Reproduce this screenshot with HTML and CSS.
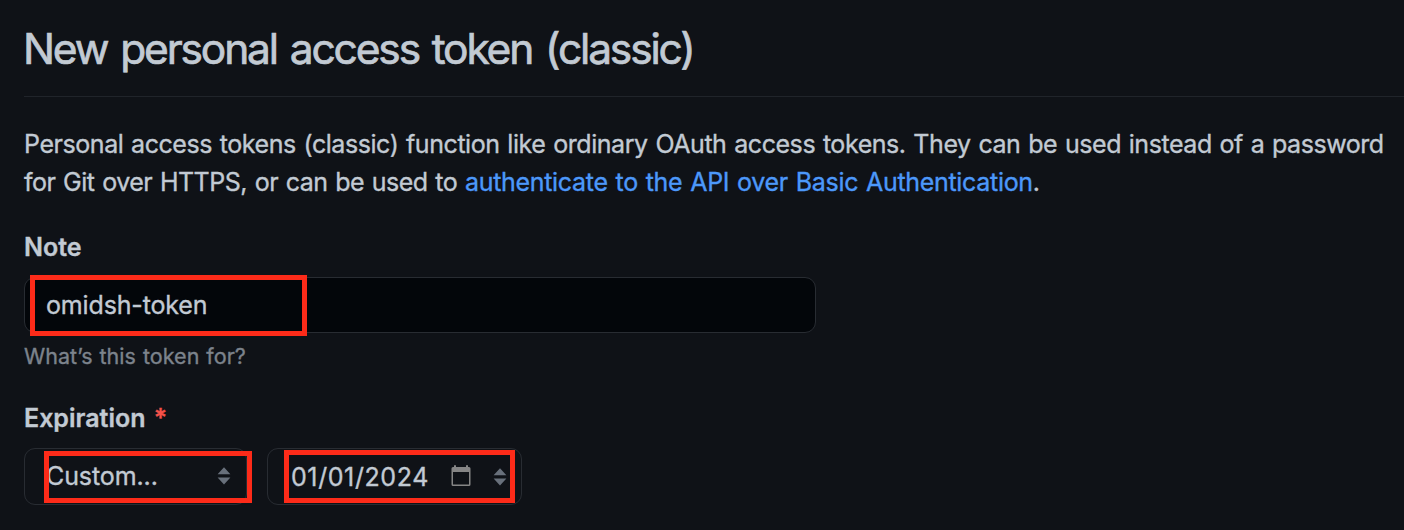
FILE: index.html
```html
<!DOCTYPE html>
<html lang="en">
<head>
<meta charset="utf-8">
<title>New personal access token (classic)</title>
<link rel="stylesheet" href="styles.css">
</head>
<body>
<main class="page">
  <h1 class="title">New personal access token (classic)</h1>
  <p class="intro"><span class="intro-first">Personal access tokens (classic) function like ordinary OAuth access tokens. They can be used instead of a password</span><br><span class="intro-second">for Git over HTTPS, or can be used to <a class="link">authenticate to the API over Basic Authentication</a>.</span></p>
  <section class="note">
    <label class="label label-note">Note</label>
    <div class="field field-note"><span class="value-note">omidsh-token</span><span class="mark mark-note"></span></div>
    <p class="hint">What’s this token for?</p>
  </section>
  <section class="expiration">
    <label class="label label-expiration">Expiration <span class="required">*</span></label>
    <div class="controls">
      <div class="field field-select">
        <span class="value-select">Custom...</span>
        <svg class="arrows" width="14" height="18" viewBox="0 0 14 18"><path d="M7 0.3L13.4 7.3H0.6zM0.6 10.5H13.4L7 17.6z"/></svg>
        <span class="mark mark-select"></span>
      </div>
      <div class="field field-date">
        <span class="value-date">01/01/2024</span>
        <svg class="calendar" width="20" height="22" viewBox="0 0 20 22"><path fill-rule="evenodd" d="M3 0.3H5V2H15V0.3H17V2H18Q19.5 2 19.5 3.5V19.5Q19.5 21 18 21H2Q0.5 21 0.5 19.5V3.5Q0.5 2 2 2H3zM2 7V19.5H18V7z"/></svg>
        <svg class="arrows" width="14" height="18" viewBox="0 0 14 18"><path d="M7 0.3L13.4 7.3H0.6zM0.6 10.5H13.4L7 17.6z"/></svg>
        <span class="mark mark-date"></span>
      </div>
    </div>
  </section>
</main>
</body>
</html>
```
FILE: styles.css
```css
* { box-sizing: border-box; }
body {
  margin: 0;
  height: 530px;
  overflow: hidden;
  background: #0f1217;
  color: #c2cad3;
  font-family: Inter, "Liberation Sans", sans-serif;
  font-size: 25px;
  font-weight: 400;
  -webkit-text-stroke: 0.35px currentColor;
}
.page { padding-left: 24px; }
.title {
  margin: 0;
  height: 97px;
  padding-top: 19px;
  border-bottom: 1px solid #20242a;
  font-size: 42.5px;
  font-weight: 400;
  line-height: 60px;
  letter-spacing: -2.15px;
  word-spacing: 3px;
  text-indent: -1px;
  white-space: nowrap;
  -webkit-text-stroke-width: 0.7px;
}
.intro {
  margin: 0;
  padding-top: 28px;
  line-height: 38px;
  white-space: nowrap;
}
.intro-first { letter-spacing: -0.44px; word-spacing: 1.15px; }
.intro-second { letter-spacing: -0.5px; word-spacing: 1.15px; }
.link { color: #4c98fa; letter-spacing: -0.31px; }
.note { padding-top: 27px; }
.label {
  display: block;
  font-weight: 600;
  line-height: 38px;
}
.field {
  position: relative;
  display: flex;
  align-items: center;
  border: 1px solid #282c32;
  border-radius: 11px;
}
.field-note {
  width: 792px;
  height: 56px;
  margin-top: 11px;
  padding-left: 21px;
  background: #03060a;
}
.value-note { letter-spacing: -0.15px; }
.hint {
  margin: 0;
  padding-top: 7px;
  color: #7c838c;
  font-size: 21.5px;
  line-height: 32px;
  letter-spacing: 0.05px;
  word-spacing: 0.8px;
}
.expiration { padding-top: 27px; }
.required {
  margin-left: 2px;
  color: #f45149;
}
.controls {
  display: flex;
  gap: 20px;
  margin-top: 11px;
}
.field-select {
  width: 223px;
  height: 57px;
  padding: 0 15px 1px 21px;
  justify-content: space-between;
}
.value-select { letter-spacing: -0.1px; }
.field-date {
  width: 255px;
  height: 57px;
  padding-left: 23px;
}
.value-date { width: 137px; letter-spacing: 0.6px; }
.calendar {
  margin: 0 0 2px 23px;
  fill: #858585;
}
.arrows { fill: #68707b; }
.field-date .arrows { margin-left: 22px; }
.mark {
  position: absolute;
  border: 5px solid #fd2b19;
}
.mark-note { left: 5px; top: -3px; width: 277px; height: 61px; }
.mark-select { left: 19px; top: 2px; width: 208px; height: 52px; }
.mark-date { left: 16px; top: 1px; width: 231px; height: 53px; }
```
